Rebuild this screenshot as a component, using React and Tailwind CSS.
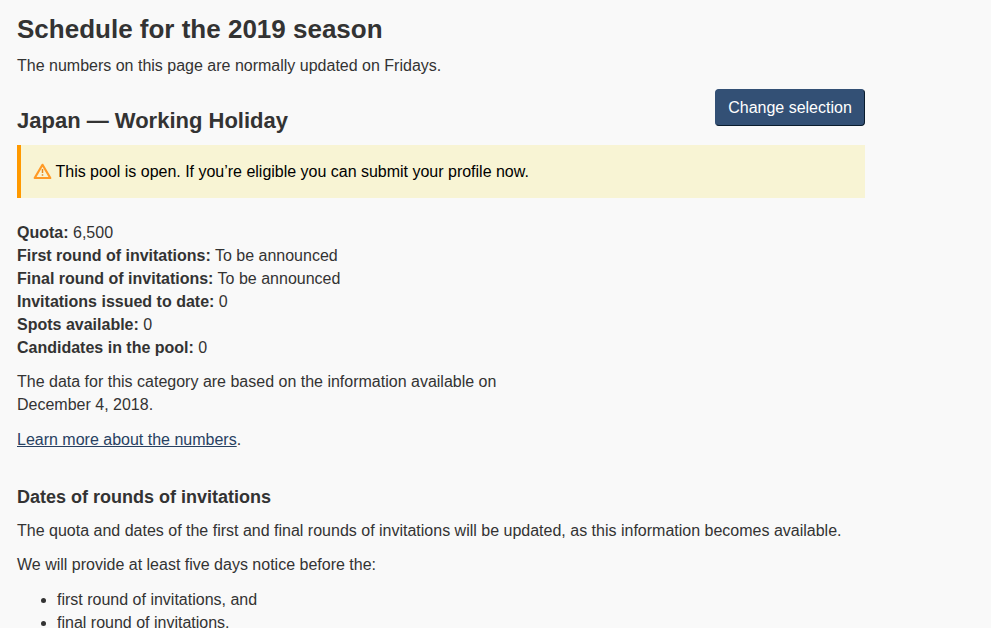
const stats = [
  { label: "Quota:", value: "6,500" },
  { label: "First round of invitations:", value: "To be announced" },
  { label: "Final round of invitations:", value: "To be announced" },
  { label: "Invitations issued to date:", value: "0" },
  { label: "Spots available:", value: "0" },
  { label: "Candidates in the pool:", value: "0" },
];

function WarningIcon() {
  return (
    <svg width="19" height="17" viewBox="0 0 19 17" className="mr-[3.5px] shrink-0" aria-hidden="true">
      <path d="M9.5 1.8 L17.3 15 H1.7 Z" fill="none" stroke="#ff9a26" strokeWidth="2.2" strokeLinejoin="round" />
      <path d="M9.5 6 V10 M9.5 11.2 V12.8" stroke="#e8861f" strokeWidth="1.5" />
    </svg>
  );
}

export default function App() {
  return (
    <main className="h-[628px] overflow-hidden bg-[#f9f9f9] pl-[17px] font-['Liberation_Sans',Arial,sans-serif] text-[16px] leading-[23px] text-[#333]">
      <div className="w-[848px]">
        <h2 className="pt-[14px] text-[26px] leading-[30px] font-bold">Schedule for the 2019 season</h2>
        <p className="mt-[10px]">The numbers on this page are normally updated on Fridays.</p>

        <div className="mt-[12px] flex h-[56px] items-start justify-between">
          <h3 className="mt-[19px] text-[22px] leading-[26px] font-bold">Japan — Working Holiday</h3>
          <button className="h-[37px] w-[150px] rounded-[4px] border border-t-[#335075] border-r-[#091c2d] border-b-[#091c2d] border-l-[#335075] bg-[#335075] text-center text-white">
            Change selection
          </button>
        </div>

        <div className="flex h-[53px] items-center border-l-4 border-[#f90] bg-[#f8f4d4] pl-[12px] text-black">
          <WarningIcon />
          <p className="tracking-[-0.01px]">This pool is open. If you’re eligible you can submit your profile now.</p>
        </div>

        <ul className="mt-[23px]">
          {stats.map((item) => (
            <li key={item.label}>
              <strong>{item.label}</strong> {item.value}
            </li>
          ))}
        </ul>

        <p className="mt-[11px] w-[500px]">
          The data for this category are based on the information available on
          <br />
          December 4, 2018.
        </p>
        <p className="mt-[12px]">
          <a href="#" className="text-[#284162] underline">Learn more about the numbers</a>.
        </p>

        <h4 className="mt-[35px] text-[18px] leading-[23px] font-bold">Dates of rounds of invitations</h4>
        <p className="mt-[10px]">
          The quota and dates of the first and final rounds of invitations will be updated, as this information becomes available.
        </p>
        <p className="mt-[11px]">We will provide at least five days notice before the:</p>
        <ul className="mt-[12px] list-disc pl-[40px]">
          <li>first round of invitations, and</li>
          <li>final round of invitations.</li>
        </ul>
      </div>
    </main>
  );
}
